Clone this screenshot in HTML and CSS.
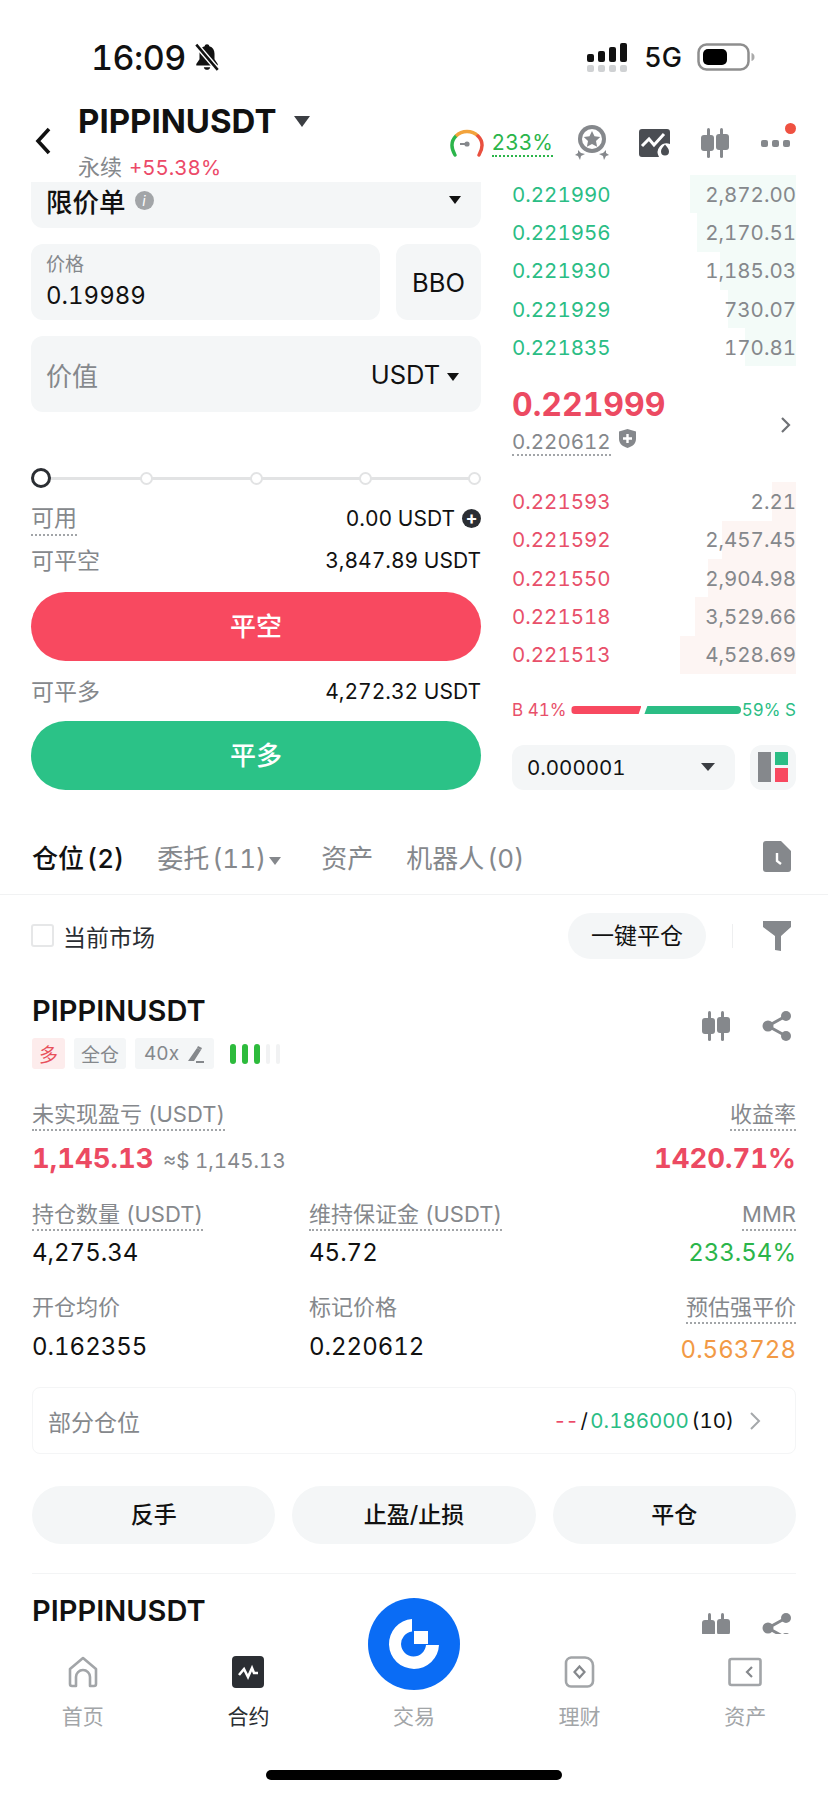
FILE: index.html
```html
<!DOCTYPE html>
<html lang="zh">
<head>
    <meta charset="UTF-8">
    <meta name="viewport" content="width=device-width, initial-scale=1.0">
    <title>PIPPINUSDT</title>
    <link rel="stylesheet" href="styles.css">
</head>
<body>
<div class="phone">

    <!-- status bar -->
    <div class="status-bar">
        <div class="status-left">
            <span class="clock">16:09</span>
            <svg width="30" height="30" viewBox="0 0 28 28"><path d="M14 2c-1.300 0-2 .8-2.200 1.900C8.500 4.900 7 7.500 7 11v5l-3 4.500V22h20v-1.500L21 16v-5c0-3.500-1.500-6.100-4.800-7.100C16 2.800 15.300 2 14 2z" fill="#111"/><path d="M11 23.500h6c-.4 1.600-1.600 2.500-3 2.500s-2.600-.9-3-2.500z" fill="#111"/><path d="M4 2.500 24 26" stroke="#fff" stroke-width="5"/><path d="M4 2.500 24 26" stroke="#111" stroke-width="2.400"/></svg>
        </div>
        <div class="status-right">
            <svg width="44" height="30" viewBox="0 0 44 30"><rect x="1" y="11" width="7" height="8" rx="2" fill="#111"/><rect x="12" y="8" width="7" height="11" rx="2" fill="#111"/><rect x="23" y="4" width="7" height="15" rx="2" fill="#111"/><rect x="34" y="0" width="7" height="19" rx="2" fill="#111"/><g fill="#cfd1d3"><rect x="1" y="22" width="7" height="7" rx="2"/><rect x="12" y="22" width="7" height="7" rx="2"/><rect x="23" y="22" width="7" height="7" rx="2"/><rect x="34" y="22" width="7" height="7" rx="2"/></g></svg>
            <span class="net">5G</span>
            <svg width="58" height="28" viewBox="0 0 58 28"><rect x="1.500" y="1.500" width="50" height="25" rx="8" fill="none" stroke="#8e8e8e" stroke-width="2.500"/><rect x="6" y="6" width="24" height="16" rx="5" fill="#000"/><path d="M54.500 10c2 .5 3 2 3 4s-1 3.500-3 4z" fill="#aaa"/></svg>
        </div>
    </div>

    <!-- header -->
    <div class="top-bar">
        <svg class="back" width="20" height="30" viewBox="0 0 20 30"><path d="M15 3 4 15l11 12" fill="none" stroke="#111" stroke-width="3.600"/></svg>
        <div class="symbol">
            <div class="symbol-name">PIPPINUSDT <i class="caret caret-lg"></i></div>
            <div class="symbol-sub"><span>永续</span> <b>+55.38%</b></div>
        </div>
        <div class="top-icons">
            <svg width="34" height="28" viewBox="0 0 34 28"><path d="M5 26C1 19 1 12 6 7" fill="none" stroke="#2bb54a" stroke-width="3.400" stroke-linecap="round"/><path d="M6 7c6-6 16-6 22 0" fill="none" stroke="#f2a33c" stroke-width="3.400"/><path d="M28 7c5 5 5 12 1 19" fill="none" stroke="#e9503f" stroke-width="3.400" stroke-linecap="round"/><circle cx="17" cy="15" r="2.600" fill="#85888c"/><path d="M10 15h6" stroke="#85888c" stroke-width="2"/></svg>
            <span class="leverage">233%</span>
            <svg class="ic-medal" width="34" height="36" viewBox="0 0 34 36"><circle cx="17" cy="14" r="14" fill="#85888c"/><circle cx="17" cy="14" r="10" fill="#fff"/><path d="m17 6 2.500 5.300 5.700.7-4.200 4 1.100 5.700-5.100-2.800-5.100 2.800 1.100-5.700-4.200-4 5.700-.7z" fill="#85888c"/><path d="m3 25 3 3 4 1-4 2-1 4-2-4-3-1 3-2zM31 25l-3 3-4 1 4 2 1 4 2-4 3-1-3-2z" fill="#85888c"/></svg>
            <svg class="ic-chart" width="32" height="28" viewBox="0 0 32 28"><path d="M3 0h25a3 3 0 0 1 3 3v12a9 9 0 0 0-11 13H3a3 3 0 0 1-3-3V3a3 3 0 0 1 3-3z" fill="#4a4d52"/><path d="m3 17 7-7 5 6 10-11" fill="none" stroke="#fff" stroke-width="3"/><path d="M26 15.500c2.500 3 4 4.500 4 7a4 4 0 0 1-8 0c0-2.500 1.500-4 4-7z" fill="#4a4d52"/></svg>
            <svg class="ic-candle" width="30" height="30" viewBox="0 0 30 30"><g fill="#85888c"><rect x="7" y="0" width="3" height="30" rx="1.500"/><rect x="1" y="7" width="13" height="16" rx="3"/><rect x="20" y="0" width="3" height="30" rx="1.500"/><rect x="16" y="6" width="13" height="16" rx="3"/></g></svg>
            <div class="more">
                <i></i><i></i><i></i>
                <span class="red-dot"></span>
            </div>
        </div>
    </div>

    <!-- order form + book -->
    <div class="trade">
        <div class="form">
            <div class="field type-select">
                <span class="type-name">限价单</span>
                <span class="info">i</span>
                <i class="caret caret-sm push"></i>
            </div>
            <div class="price-row">
                <div class="field price-box">
                    <div class="price-label">价格</div>
                    <div class="price-val">0.19989</div>
                </div>
                <div class="field bbo">BBO</div>
            </div>
            <div class="field value-box">
                <span class="value-label">价值</span>
                <span class="value-unit">USDT <i class="caret caret-sm"></i></span>
            </div>
            <div class="slider">
                <span class="knob"></span>
                <span class="stop"></span>
                <span class="stop"></span>
                <span class="stop"></span>
                <span class="stop"></span>
            </div>
            <div class="line line-first">
                <span class="dotted">可用</span>
                <span class="line-val">0.00 USDT <i class="plus">+</i></span>
            </div>
            <div class="line">
                <span>可平空</span>
                <span class="line-val">3,847.89 USDT</span>
            </div>
            <div class="big-btn btn-red">平空</div>
            <div class="line line-mid">
                <span>可平多</span>
                <span class="line-val">4,272.32 USDT</span>
            </div>
            <div class="big-btn btn-green">平多</div>
        </div>

        <div class="book">
            <div class="book-rows book-buy">
                <div class="row"><span class="depth" style="width:106px"></span><span>0.221990</span><em>2,872.00</em></div>
                <div class="row"><span class="depth" style="width:99px"></span><span>0.221956</span><em>2,170.51</em></div>
                <div class="row"><span class="depth" style="width:76px"></span><span>0.221930</span><em>1,185.03</em></div>
                <div class="row"><span class="depth" style="width:68px"></span><span>0.221929</span><em>730.07</em></div>
                <div class="row"><span class="depth" style="width:51px"></span><span>0.221835</span><em>170.81</em></div>
            </div>
            <div class="mid">
                <div>
                    <div class="mid-price">0.221999</div>
                    <div class="mark">
                        <span class="mark-val">0.220612</span>
                        <svg width="17" height="19" viewBox="0 0 17 19"><path d="M8.500 0 17 2.500V10c0 4.500-3.500 7.500-8.500 9C3.500 17.500 0 14.500 0 10V2.500z" fill="#85888c"/><path d="M8.500 5v9M4 9.500h9" stroke="#fff" stroke-width="2.400"/></svg>
                    </div>
                </div>
                <svg class="mid-arrow" width="12" height="18" viewBox="0 0 12 18"><path d="m2 2 7 7-7 7" fill="none" stroke="#6f7276" stroke-width="2.200"/></svg>
            </div>
            <div class="book-rows book-sell">
                <div class="row"><span class="depth" style="width:24px"></span><span>0.221593</span><em>2.21</em></div>
                <div class="row"><span class="depth" style="width:74px"></span><span>0.221592</span><em>2,457.45</em></div>
                <div class="row"><span class="depth" style="width:88px"></span><span>0.221550</span><em>2,904.98</em></div>
                <div class="row"><span class="depth" style="width:101px"></span><span>0.221518</span><em>3,529.66</em></div>
                <div class="row"><span class="depth" style="width:116px"></span><span>0.221513</span><em>4,528.69</em></div>
            </div>
            <div class="ratio">
                <span class="ratio-b">B 41%</span>
                <span class="bar-b"></span>
                <span class="bar-s"></span>
                <span class="ratio-s">59% S</span>
            </div>
            <div class="book-foot">
                <div class="field step">0.000001 <i class="caret caret-md"></i></div>
                <div class="field layout-btn">
                    <svg width="30" height="30" viewBox="0 0 30 30"><rect width="13" height="30" fill="#85888c"/><rect x="17" width="13" height="13" fill="#2bbd85"/><rect x="17" y="16" width="13" height="14" fill="#f84960"/></svg>
                </div>
            </div>
        </div>
    </div>

    <!-- tabs -->
    <div class="tabs">
        <span class="tab tab-on">仓位 (2)</span>
        <span class="tab tab-orders">委托 (11) <i class="caret caret-xs"></i></span>
        <span class="tab tab-assets">资产</span>
        <span class="tab tab-bots">机器人 (0)</span>
        <svg class="push" width="28" height="31" viewBox="0 0 28 31"><path d="M3 0h15l10 10v18a3 3 0 0 1-3 3H3a3 3 0 0 1-3-3V3a3 3 0 0 1 3-3z" fill="#85888c"/><path d="M14 12v8l4 3" fill="none" stroke="#fff" stroke-width="2.400"/></svg>
    </div>

    <div class="filter">
        <span class="check"></span>
        <span class="filter-text">当前市场</span>
        <span class="pill push">一键平仓</span>
        <span class="sep"></span>
        <svg width="28" height="30" viewBox="0 0 28 30"><path d="M0 0h28v6L18 15v15l-6-1V15L0 6z" fill="#85888c"/></svg>
    </div>

    <!-- position card -->
    <div class="position">
        <div class="pos-head">
            <div>
                <div class="pos-name">PIPPINUSDT</div>
                <div class="tags">
                    <span class="tag tag-long">多</span>
                    <span class="tag">全仓</span>
                    <span class="tag tag-lev">40x
                        <svg width="18" height="18" viewBox="0 0 18 18"><path d="M1 16 10 3l4 2-7 11zM9 16h8v2H9z" fill="#85888c"/><path d="m11 1 4 2-1 2-4-2z" fill="#85888c"/></svg>
                    </span>
                    <span class="risk">
                        <i></i><i></i><i></i><i class="off"></i><i class="off"></i>
                    </span>
                </div>
            </div>
            <div class="pos-icons">
                <svg width="30" height="30" viewBox="0 0 30 30"><g fill="#85888c"><rect x="7" y="0" width="3" height="30" rx="1.500"/><rect x="1" y="7" width="13" height="16" rx="3"/><rect x="20" y="0" width="3" height="30" rx="1.500"/><rect x="16" y="6" width="13" height="16" rx="3"/></g></svg>
                <svg width="30" height="30" viewBox="0 0 30 30"><path d="M24 5 6 15l18 10" fill="none" stroke="#85888c" stroke-width="3"/><circle cx="24" cy="5" r="5" fill="#85888c"/><circle cx="6" cy="15" r="5.500" fill="#85888c"/><circle cx="24" cy="25" r="5" fill="#85888c"/></svg>
            </div>
        </div>

        <div class="stats">
            <div class="stat stat-first stat-wide">
                <span class="stat-label dotted">未实现盈亏 (USDT)</span>
                <div class="pnl"><b>1,145.13</b> <span>≈$ 1,145.13</span></div>
            </div>
            <div class="stat stat-first stat-end">
                <span class="stat-label dotted">收益率</span>
                <div class="pnl"><b>1420.71%</b></div>
            </div>
            <div class="stat">
                <span class="stat-label dotted">持仓数量 (USDT)</span>
                <div class="stat-val">4,275.34</div>
            </div>
            <div class="stat">
                <span class="stat-label dotted">维持保证金 (USDT)</span>
                <div class="stat-val">45.72</div>
            </div>
            <div class="stat stat-end">
                <span class="stat-label dotted">MMR</span>
                <div class="stat-val val-green">233.54%</div>
            </div>
            <div class="stat stat-low">
                <span class="stat-label">开仓均价</span>
                <div class="stat-val">0.162355</div>
            </div>
            <div class="stat stat-low">
                <span class="stat-label">标记价格</span>
                <div class="stat-val">0.220612</div>
            </div>
            <div class="stat stat-low stat-end">
                <span class="stat-label dotted">预估强平价</span>
                <div class="stat-val val-orange">0.563728</div>
            </div>
        </div>

        <div class="partial">
            <span class="partial-label">部分仓位</span>
            <span class="partial-val push"><span class="dash">--</span> / <span class="tp">0.186000</span> (10)</span>
            <svg width="12" height="20" viewBox="0 0 12 20"><path d="m2 2 8 8-8 8" fill="none" stroke="#a5a8ab" stroke-width="2"/></svg>
        </div>

        <div class="pos-btns">
            <span class="pos-btn">反手</span>
            <span class="pos-btn">止盈/止损</span>
            <span class="pos-btn">平仓</span>
        </div>
    </div>

    <div class="pos-next">
        <div class="pos-name">PIPPINUSDT</div>
        <div class="pos-icons">
            <svg width="30" height="30" viewBox="0 0 30 30"><g fill="#85888c"><rect x="7" y="0" width="3" height="30" rx="1.500"/><rect x="1" y="7" width="13" height="16" rx="3"/><rect x="20" y="0" width="3" height="30" rx="1.500"/><rect x="16" y="6" width="13" height="16" rx="3"/></g></svg>
            <svg width="30" height="30" viewBox="0 0 30 30"><path d="M24 5 6 15l18 10" fill="none" stroke="#85888c" stroke-width="3"/><circle cx="24" cy="5" r="5" fill="#85888c"/><circle cx="6" cy="15" r="5.500" fill="#85888c"/><circle cx="24" cy="25" r="5" fill="#85888c"/></svg>
        </div>
    </div>

    <!-- bottom nav, sits over the list -->
    <div class="nav">
        <div class="nav-item">
            <svg width="32" height="32" viewBox="0 0 32 32"><path d="M9 30H5a2 2 0 0 1-2-2V13L16 2l13 11v15a2 2 0 0 1-2 2h-4v-9a7 7 0 0 0-14 0z" fill="none" stroke="#a2a5a8" stroke-width="2.600" stroke-linejoin="round"/></svg>
            <span>首页</span>
        </div>
        <div class="nav-item nav-on">
            <svg width="32" height="32" viewBox="0 0 32 32"><rect width="32" height="32" rx="4" fill="#2b2e33"/><path d="m7 19 5-6 4 8 4-9 2 5h4" fill="none" stroke="#fff" stroke-width="2.600"/></svg>
            <span>合约</span>
        </div>
        <div class="nav-item nav-trade">
            <span class="nav-spacer"></span>
            <span>交易</span>
        </div>
        <div class="nav-item">
            <svg width="32" height="32" viewBox="0 0 32 32"><path d="M7 1.500h14a8 8 0 0 1 8 8V25a5.500 5.500 0 0 1-5.500 5.500H7A5 5 0 0 1 2 25V7a5.500 5.500 0 0 1 5-5.500z" fill="none" stroke="#a2a5a8" stroke-width="2.600"/><path d="m15.500 10.500 5 5.500-5 5.500-5-5.500z" fill="none" stroke="#85888c" stroke-width="2.200"/></svg>
            <span>理财</span>
        </div>
        <div class="nav-item">
            <svg width="34" height="32" viewBox="0 0 34 32"><rect x="1.500" y="3" width="31" height="26" rx="2" fill="none" stroke="#a2a5a8" stroke-width="2.600"/><path d="m24 11-5 5 5 5" fill="none" stroke="#85888c" stroke-width="2.200"/></svg>
            <span>资产</span>
        </div>
        <div class="home-bar"></div>
    </div>
    <div class="trade-fab">
        <svg width="50" height="50" viewBox="0 0 50 50"><path d="M23 0A25 25 0 1 0 50 26H37A12.500 12.500 0 1 1 23 12.500z" fill="#fff"/><rect x="25" y="12" width="14" height="13" fill="#fff"/></svg>
    </div>

</div>
</body>
</html>
```

FILE: styles.css
```css
* {
    box-sizing: border-box;
}

body {
    margin: 0;
    padding: 0;
    background-color: #fff;
    color: #111;
    font-family: Inter, "Liberation Sans", "Noto Sans CJK SC", sans-serif;
    font-variant-numeric: tabular-nums;
}

.phone {
    position: relative;
    width: 828px;
    height: 1795px;
    overflow: hidden;
    background-color: #fff;
}

.push {
    margin-left: auto;
}

.caret {
    display: inline-block;
    width: 0;
    height: 0;
    border-left: 7px solid transparent;
    border-right: 7px solid transparent;
    border-top: 9px solid #3b3e43;
    vertical-align: middle;
}

.caret-lg {
    margin-left: 9px;
    border-left-width: 8px;
    border-right-width: 8px;
    border-top-width: 11px;
    vertical-align: 6px;
}

.caret-sm {
    border-left-width: 6px;
    border-right-width: 6px;
    border-top-width: 8px;
    border-top-color: #111;
}

.caret-md {
    margin-left: auto;
    border-left-width: 7px;
    border-right-width: 7px;
    border-top-width: 8px;
}

.caret-xs {
    border-left-width: 6px;
    border-right-width: 6px;
    border-top-width: 8px;
    border-top-color: #85888c;
}

.dotted {
    padding-bottom: 1px;
    border-bottom: 2px dotted #a2a5a8;
}

/* status bar */
.status-bar {
    display: flex;
    justify-content: space-between;
    align-items: center;
    height: 90px;
    padding: 24px 73px 0 91px;
}

.status-left,
.status-right {
    display: flex;
    align-items: center;
}

.clock {
    font-size: 34px;
    font-weight: 500;
    letter-spacing: -0.5px;
}

.status-left svg {
    margin-left: 6px;
}

.status-right svg:first-child {
    margin-top: 2px;
}

.net {
    margin: 0 15px 0 14px;
    font-size: 27px;
    font-weight: 500;
}

/* header */
.top-bar {
    display: flex;
    align-items: flex-start;
    height: 85px;
    padding: 0 38px 0 34px;
}

.back {
    margin-top: 36px;
}

.symbol {
    margin: 13px 0 0 24px;
}

.symbol-name {
    font-size: 33px;
    font-weight: 700;
    line-height: 36px;
    white-space: nowrap;
}

.symbol-sub {
    margin-top: 15px;
    font-size: 22px;
    line-height: 26px;
    color: #85888c;
}

.symbol-sub b {
    margin-left: 1px;
    font-size: 20.500px;
    font-weight: 400;
    color: #ec4a68;
}

.top-icons {
    display: flex;
    align-items: center;
    margin: 35px 0 0 auto;
}

.leverage {
    margin: 0 22px 0 8px;
    font-size: 21px;
    color: #2bb54a;
    border-bottom: 2px dotted #2bb54a;
}

.ic-chart {
    margin-left: 30px;
}

.ic-candle {
    margin-left: 29px;
}

.more {
    position: relative;
    display: flex;
    gap: 4px;
    margin-left: 31px;
}

.more i {
    width: 7px;
    height: 7px;
    border-radius: 2px;
    background-color: #85888c;
}

.red-dot {
    position: absolute;
    top: -17px;
    right: -6px;
    width: 11px;
    height: 11px;
    border-radius: 50%;
    background-color: #ef5141;
}

/* trade area */
.trade {
    display: flex;
    gap: 31px;
    padding: 0 32px 0 31px;
}

.form {
    flex: none;
    width: 450px;
    padding-top: 7px;
}

.field {
    display: flex;
    align-items: center;
    background-color: #f4f6f7;
    border-radius: 12px;
}

.type-select {
    height: 46px;
    padding: 0 20px 10px 15px;
    border-radius: 0 0 12px 12px;
}

.type-name {
    font-size: 26.500px;
    font-weight: 500;
}

.info {
    width: 19px;
    height: 19px;
    margin-left: 9px;
    border-radius: 50%;
    background-color: #a2a5a8;
    color: #fff;
    font-size: 14px;
    font-style: italic;
    line-height: 19px;
    text-align: center;
}

.price-row {
    display: flex;
    gap: 16px;
    margin-top: 16px;
}

.price-box {
    display: block;
    flex: 1;
    height: 76px;
    padding: 9px 15px 0;
}

.price-label {
    font-size: 19px;
    line-height: 24px;
    color: #85888c;
}

.price-val {
    margin-top: 4px;
    font-size: 24px;
    line-height: 30px;
}

.bbo {
    justify-content: center;
    width: 85px;
    height: 76px;
    font-size: 25.500px;
}

.value-box {
    justify-content: space-between;
    height: 76px;
    margin-top: 16px;
    padding: 0 22px 0 15px;
}

.value-label {
    font-size: 26px;
    color: #85888c;
}

.value-unit {
    font-size: 25.500px;
}

.slider {
    position: relative;
    display: flex;
    justify-content: space-between;
    align-items: center;
    height: 20px;
    margin-top: 56px;
    background: linear-gradient(#e2e3e4, #e2e3e4) center / 100% 3px no-repeat;
}

.knob {
    width: 20px;
    height: 20px;
    margin-right: -7px;
    border: 3px solid #2b2e33;
    border-radius: 50%;
    background-color: #fff;
}

.stop {
    width: 13px;
    height: 13px;
    border: 2px solid #e2e3e4;
    border-radius: 50%;
    background-color: #fff;
}

.line {
    display: flex;
    justify-content: space-between;
    align-items: center;
    height: 30px;
    margin-top: 12px;
    font-size: 23px;
    color: #85888c;
}

.line-first {
    margin-top: 14px;
}

.line-mid {
    margin-top: 14px;
}

.line-val {
    display: flex;
    align-items: center;
    gap: 7px;
    padding-top: 2px;
    font-size: 21px;
    color: #111;
}

.plus {
    width: 19px;
    height: 19px;
    border-radius: 50%;
    background-color: #2b2e33;
    color: #fff;
    font-size: 18px;
    font-style: normal;
    font-weight: 700;
    line-height: 18px;
    text-align: center;
}

.big-btn {
    height: 69px;
    border-radius: 35px;
    color: #fff;
    font-size: 26px;
    font-weight: 500;
    line-height: 69px;
    text-align: center;
}

.btn-red {
    margin-top: 18px;
    background-color: #f84960;
}

.btn-green {
    margin-top: 16px;
    background-color: #2bc287;
}

/* order book */
.book {
    flex: 1;
    min-width: 0;
}

.row {
    position: relative;
    display: flex;
    justify-content: space-between;
    align-items: center;
    height: 38.3px;
    font-size: 20.500px;
}

.row span:not(.depth),
.row em {
    position: relative;
    font-style: normal;
}

.row em {
    color: #85888c;
}

.depth {
    position: absolute;
    top: 0;
    right: 0;
    bottom: 0;
}

.book-buy .row span:not(.depth) {
    color: #2bbd85;
}

.book-buy .depth {
    background-color: #f3fbf8;
}

.book-sell .row span:not(.depth) {
    color: #e8506a;
}

.book-sell .depth {
    background-color: #fdf5f3;
}

.mid {
    display: flex;
    justify-content: space-between;
    align-items: center;
    height: 116px;
    padding: 0 4px 8px 0;
}

.mid-arrow {
    margin-top: 9px;
}

.mid-price {
    font-size: 32px;
    font-weight: 700;
    color: #ec4a62;
    line-height: 40px;
}

.mark {
    display: flex;
    align-items: flex-start;
    gap: 8px;
    margin-top: 4px;
}

.mark-val {
    font-size: 20.500px;
    line-height: 25px;
    color: #85888c;
    border-bottom: 2px dotted #a2a5a8;
}

.ratio {
    display: flex;
    align-items: center;
    height: 20px;
    margin-top: 26px;
    font-size: 17px;
    white-space: nowrap;
}

.ratio-b {
    flex-shrink: 0;
    color: #e8506a;
}

.ratio-s {
    flex-shrink: 0;
    margin-left: auto;
    color: #2bbd85;
}

.bar-b,
.bar-s {
    height: 8px;
}

.bar-b {
    width: 70px;
    margin-left: 5px;
    border-radius: 4px 0 0 4px;
    background-color: #f84960;
    clip-path: polygon(0 0, 100% 0, 96% 100%, 0 100%);
}

.bar-s {
    width: 97px;
    margin-left: 3px;
    border-radius: 0 4px 4px 0;
    background-color: #2bbd85;
    clip-path: polygon(3% 0, 100% 0, 100% 100%, 0 100%);
}

.book-foot {
    display: flex;
    justify-content: space-between;
    margin-top: 25px;
}

.step {
    width: 223px;
    height: 45px;
    padding: 0 20px 0 15px;
    font-size: 20.500px;
}

.layout-btn {
    justify-content: center;
    width: 46px;
    height: 45px;
}

/* tabs */
.tabs {
    display: flex;
    align-items: center;
    height: 73px;
    margin-top: 32px;
    padding: 0 37px 3px 32px;
    border-bottom: 1px solid #f1f2f3;
    font-size: 26px;
    word-spacing: -4px;
    color: #85888c;
}

.tab-on {
    font-weight: 500;
    color: #111;
}

.tab-orders {
    margin-left: 33px;
}

.tab-assets {
    margin-left: 40px;
}

.tab-bots {
    margin-left: 33px;
}

.filter {
    display: flex;
    align-items: center;
    height: 84px;
    padding: 0 37px 3px 31px;
}

.check {
    width: 23px;
    height: 23px;
    border: 2px solid #e6e7e8;
    border-radius: 3px;
}

.filter-text {
    margin-left: 9px;
    font-size: 23px;
    color: #2b2e33;
}

.pill {
    width: 138px;
    height: 46px;
    border-radius: 23px;
    background-color: #f4f6f7;
    font-size: 23px;
    line-height: 46px;
    text-align: center;
}

.sep {
    width: 1px;
    height: 24px;
    margin: 0 30px 0 26px;
    background-color: #eeeff0;
}

/* position */
.position {
    padding: 0 32px;
}

.pos-head {
    display: flex;
    justify-content: space-between;
    align-items: flex-start;
    margin-top: 15px;
}

.pos-name {
    font-size: 29px;
    font-weight: 600;
    line-height: 34px;
}

.pos-icons {
    display: flex;
    gap: 31px;
    margin: 17px 4px 0 0;
}

.tags {
    display: flex;
    align-items: center;
    gap: 9px;
    margin-top: 10px;
}

.tag {
    display: flex;
    align-items: center;
    justify-content: center;
    gap: 8px;
    height: 31px;
    padding: 0 7px;
    border-radius: 3px;
    background-color: #f4f6f7;
    font-size: 19px;
    color: #85888c;
}

.tag-lev {
    padding: 0 9px;
}

.tag-long {
    background-color: #fdecec;
    color: #e8505b;
}

.risk {
    display: flex;
    gap: 6px;
    margin-left: 7px;
}

.risk i {
    width: 6px;
    height: 20px;
    border-radius: 3px;
    background-color: #2dbb3c;
}

.risk i.off {
    width: 4px;
    background-color: #f1f2f3;
}

.stats {
    display: grid;
    grid-template-columns: 277px 1fr auto;
    margin-top: 31px;
}

.stat-wide {
    grid-column: span 2;
}

.stat {
    margin-bottom: 25px;
}

.stat-first {
    margin-bottom: 21px;
}

.stat-end {
    text-align: right;
}

.stat-label {
    display: inline-block;
    font-size: 22px;
    line-height: 28px;
    color: #85888c;
}

.pnl {
    margin-top: 9px;
    font-size: 20.500px;
    line-height: 36px;
    color: #85888c;
}

.pnl b {
    font-size: 27.500px;
    font-weight: 700;
    color: #ec4a62;
}

.pnl span {
    margin-left: 4px;
}

.stat-val {
    margin-top: 7px;
    font-size: 24px;
    line-height: 30px;
}

.stat-low {
    margin-bottom: 18px;
}

.stat-low .stat-val {
    margin-top: 11px;
}

.val-green {
    color: #2bb54a;
}

.val-orange {
    color: #f29a46;
}

.partial {
    display: flex;
    align-items: center;
    height: 67px;
    margin-top: 4px;
    padding: 0 34px 0 15px;
    border: 1px solid #f4f5f6;
    border-radius: 8px;
}

.partial-label {
    font-size: 23px;
    color: #85888c;
}

.partial-val {
    margin-right: 15px;
    font-size: 20.500px;
    word-spacing: -3px;
}

.dash {
    color: #ec4a68;
    letter-spacing: -1px;
}

.tp {
    color: #2bbd85;
}

.pos-btns {
    display: grid;
    grid-template-columns: repeat(3, 1fr);
    gap: 17px;
    margin-top: 32px;
    padding-bottom: 29px;
    border-bottom: 1px solid #f3f4f5;
}

.pos-btn {
    height: 58px;
    border-radius: 29px;
    background-color: #f4f6f7;
    font-size: 23px;
    font-weight: 500;
    line-height: 58px;
    text-align: center;
}

.pos-next {
    display: flex;
    justify-content: space-between;
    align-items: flex-start;
    margin-top: 20px;
    padding: 0 32px;
}

.pos-next .pos-icons {
    margin-top: 19px;
}

/* bottom nav */
.nav {
    position: absolute;
    left: 0;
    right: 0;
    bottom: 0;
    display: grid;
    grid-template-columns: repeat(5, 1fr);
    height: 161px;
    padding-top: 22px;
    background-color: #fff;
}

.nav-item {
    display: flex;
    flex-direction: column;
    align-items: center;
    font-size: 21px;
    color: #a2a5a8;
}

.nav-item svg,
.nav-spacer {
    height: 32px;
}

.nav-item span {
    margin-top: 17px;
    line-height: 24px;
}

.nav-item .nav-spacer {
    margin-top: 0;
}

.nav-on {
    color: #2b2e33;
}

.trade-fab {
    position: absolute;
    top: 1598px;
    left: 368px;
    display: flex;
    align-items: center;
    justify-content: center;
    width: 92px;
    height: 92px;
    border-radius: 50%;
    background-color: #0a6cf5;
}

.home-bar {
    position: absolute;
    left: 266px;
    bottom: 15px;
    width: 296px;
    height: 10px;
    border-radius: 5px;
    background-color: #000;
}
```
